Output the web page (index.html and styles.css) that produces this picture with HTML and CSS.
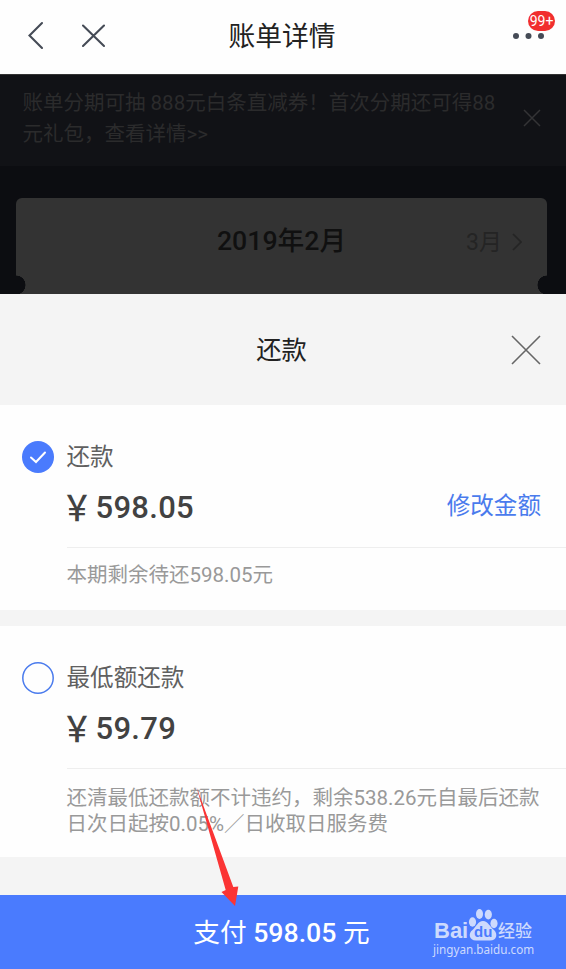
FILE: index.html
```html
<!DOCTYPE html>
<html lang="zh-CN">
<head>
<meta charset="utf-8">
<title>账单详情</title>
<link rel="stylesheet" href="styles.css">
</head>
<body>
<main class="screen">
  <header class="navbar">
    <svg class="nav-icons" viewBox="0 0 90 40" width="90" height="40"><path d="M22 8 9.500 20.500 22 33M63 10.500 84 31M84 10.500 63 31"/></svg>
    <h1 class="nav-title">账单详情</h1>
    <div class="more">
      <svg viewBox="0 0 34 8" width="34" height="8"><circle cx="4" cy="4" r="3"/><circle cx="16.500" cy="4" r="3"/><circle cx="29" cy="4" r="3"/></svg>
      <span class="badge">99+</span>
    </div>
  </header>
  <section class="notice">
    <p class="notice-text">账单分期可抽 888元白条直减券！首次分期还可得88<br>元礼包，查看详情&gt;&gt;</p>
    <svg viewBox="0 0 18 18" width="18" height="18"><path d="M1 1 17 17M17 1 1 17"/></svg>
  </section>
  <section class="bill">
    <div class="bill-card">
      <h2 class="month">2019年2月</h2>
      <span class="next">3月</span>
      <svg class="chevron" viewBox="0 0 10 18" width="10" height="18"><path d="M1 1 9 9 1 17"/></svg>
    </div>
  </section>
  <section class="sheet">
    <header class="sheet-head">
      <h2 class="sheet-title">还款</h2>
      <svg viewBox="0 0 30 30" width="30" height="30"><path d="M1 1 29 29M29 1 1 29"/></svg>
    </header>
    <article class="option">
      <svg class="radio" viewBox="0 0 32 32" width="32" height="32"><circle class="radio-on" cx="16" cy="16" r="16"/><path class="tick" d="M9 16.500 14 21 23 11.500"/></svg>
      <div class="option-body">
        <h3 class="option-name">还款</h3>
        <div class="amount-row"><span class="amount"><span class="yen">￥</span>598.05</span><a class="edit">修改金额</a></div>
        <p class="note">本期剩余待还598.05元</p>
      </div>
    </article>
    <article class="option option-min">
      <svg class="radio" viewBox="0 0 32 32" width="32" height="32"><circle class="radio-off" cx="16" cy="16" r="15.200"/></svg>
      <div class="option-body">
        <h3 class="option-name">最低额还款</h3>
        <div class="amount-row"><span class="amount"><span class="yen">￥</span>59.79</span></div>
        <p class="note note-long">还清最低还款额不计违约，剩余538.26元自最后还款<br>日次日起按0.05%／日收取日服务费</p>
      </div>
    </article>
  </section>
  <footer class="pay">
    <span class="pay-label">支付 <b>598.05</b> 元</span>
    <div class="brand">
      <div class="brand-row">
        <span class="brand-bai">Bai</span>
        <span class="paw"><svg viewBox="0 0 30 34" width="30" height="34"><ellipse cx="4.500" cy="14" rx="3.600" ry="4.700"/><ellipse cx="11.500" cy="6" rx="3.500" ry="5"/><ellipse cx="20.300" cy="6.600" rx="3.600" ry="4.900"/><ellipse cx="26" cy="15.500" rx="3.600" ry="4.700"/><path d="M15 13C10 13 8 19 4.500 22C0 25 1 32.500 8 32.500H22C29 32.500 30 26 26 22C22 19 20 13 15 13Z"/></svg><span class="du">du</span></span>
        <span class="brand-cn">经验</span>
      </div>
      <span class="brand-url">jingyan.baidu.com</span>
    </div>
  </footer>
  <svg class="pointer" viewBox="0 0 44 120" width="44" height="120"><path d="M1.500 0 38.300 100 43.300 99.500 40 119 26.500 105 30.700 103Z"/></svg>
</main>
</body>
</html>
```
FILE: styles.css
```css
* { box-sizing: border-box; margin: 0; padding: 0; }
body { width: 566px; height: 969px; overflow: hidden; font-family: Roboto, "Noto Sans CJK SC", sans-serif; }
svg { display: block; fill: none; flex: none; }
h1, h2, h3 { font-weight: 400; }
.screen { position: relative; width: 566px; height: 969px; display: flex; flex-direction: column; background: #f4f4f4; white-space: nowrap; }

.navbar { height: 74px; display: grid; grid-template-columns: 119px 1fr 121px; padding: 15px 20px 0; background: #fefefe; }
.nav-icons { stroke: #454b56; stroke-width: 2.1; stroke-linecap: round; }
.nav-title { padding-top: 1px; font-size: 26.800px; line-height: 43px; color: #222; text-align: center; }
.more { position: relative; justify-self: end; padding-top: 17px; }
.more svg { fill: #454b56; }
.badge { position: absolute; left: 16px; top: -4px; width: 27px; height: 20px; border-radius: 10px; background: #f12e2e; color: #fff; font-size: 14px; line-height: 20px; text-align: center; }

.notice { height: 92px; display: flex; justify-content: space-between; padding: 13px 25px 0 22.500px; background: #111216; border-top: 1px solid #333; }
.notice-text { font-size: 20.500px; line-height: 31px; color: #2b2b2c; }
.notice svg { margin-top: 21px; stroke: #343436; stroke-width: 1.5; }

.bill { height: 128px; padding: 32px 19px 0 16px; background: #0c0d11; }
.bill-card { height: 96px; display: grid; grid-template-columns: 1fr auto 1fr 10px; grid-template-areas: "month month month month"; padding: 22px 25px 0; border-radius: 6px 6px 0 0; background: radial-gradient(circle at 0 87px, #0c0d11 9.200px, transparent 9.700px), radial-gradient(circle at 100% 87px, #0c0d11 9.200px, transparent 9.700px), #333; }
.month { grid-area: month; font-size: 26.700px; font-weight: 500; line-height: 42px; text-align: center; color: #101010; }
.next { grid-column: 3; grid-row: 1; justify-self: end; padding-right: 10px; font-size: 23px; line-height: 46px; color: #242424; }
.chevron { grid-column: 4; grid-row: 1; margin-top: 13px; stroke: #242424; stroke-width: 1.7; }

.sheet { height: 601px; }
.sheet-head { height: 111px; display: grid; grid-template-columns: 30px 1fr 30px; align-items: center; padding: 0 25px 0 22px; }
.sheet-title { grid-column: 2; padding-top: 3px; font-size: 25.300px; font-weight: 400; line-height: 40px; text-align: center; color: #222; }
.sheet-head svg { stroke: #666; stroke-width: 1.6; }
.option { height: 205px; display: flex; padding: 36px 0 0 22px; background: #fefefe; }
.option-min { height: 231px; margin-top: 16px; }
.option-body { flex: 1; padding-left: 12.500px; }
.radio-on { fill: #4a7bfd; }
.radio-off { stroke: #4a7bed; stroke-width: 1.5; }
.tick { stroke: #fff; stroke-width: 2; stroke-linecap: round; }
.option-name { font-size: 23.600px; line-height: 32px; color: #606060; }
.amount-row { height: 75px; display: flex; justify-content: space-between; padding: 13px 25px 0 0; border-bottom: 1px solid #eee; }
.amount { display: flex; font-size: 31px; font-weight: 500; line-height: 44px; color: #424242; letter-spacing: .3px; }
.yen { width: 34px; height: 44px; margin-left: -5px; line-height: 39px; font-family: "Noto Sans CJK SC", sans-serif; transform: scaleY(1.14); }
.edit { font-size: 23.600px; line-height: 40px; color: #4a7bed; }
.note { padding-top: 14px; font-size: 20.500px; line-height: 26px; color: #999; }
.note-long { padding-top: 16px; }

.pay { height: 74px; display: grid; grid-template-columns: 120px 1fr 120px; padding: 0 13px; background: #4a7bfe; }
.pay-label { grid-column: 2; padding-right: 3px; font-size: 26.700px; line-height: 76px; text-align: center; color: #fff; }
.pay-label b { font-weight: 500; }
.brand { padding-top: 13px; color: #cddafd; }
.brand-row { display: flex; height: 34px; padding-left: 1px; }
.brand-bai { width: 34px; padding-top: 12px; font: bold 22px/22px "Liberation Sans", sans-serif; }
.paw { position: relative; width: 30px; }
.paw svg { fill: #cddafd; }
.du { position: absolute; left: 6px; top: 15px; font: bold 15px/17px "Liberation Sans", sans-serif; color: #4a7bfe; }
.brand-cn { padding-top: 13px; font-size: 17px; font-weight: 500; line-height: 21px; }
.brand-url { display: block; font: 11.700px/14px "Noto Sans", sans-serif; }
.pointer { position: absolute; left: 195px; top: 787px; fill: #fb3434; }
```
